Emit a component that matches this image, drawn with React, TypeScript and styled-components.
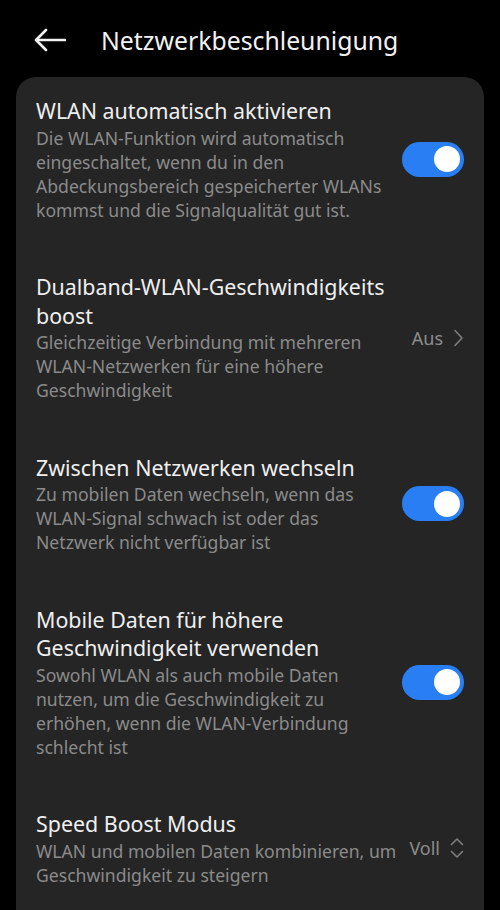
import React from "react";
import styled, { createGlobalStyle } from "styled-components";

const GlobalStyle = createGlobalStyle`
  html, body {
    margin: 0;
    padding: 0;
    background: #000000;
  }
  body {
    font-family: "Noto Sans", Roboto, "Liberation Sans", sans-serif;
    -webkit-font-smoothing: antialiased;
  }
`;

const Screen = styled.div`
  width: 500px;
  height: 910px;
  background: #000000;
  overflow: hidden;
  display: flex;
  flex-direction: column;
`;

const TopBar = styled.div`
  height: 77px;
  flex-shrink: 0;
  display: flex;
  align-items: center;
  padding: 2px 0 0 34px;
  box-sizing: border-box;
`;

const BackButton = styled.div`
  width: 34px;
  height: 30px;
  display: flex;
  align-items: center;
  margin-right: 33px;
`;

const Title = styled.div`
  font-size: 24.8px;
  color: #f2f2f2;
`;

const Card = styled.div`
  margin: 0 16px;
  background: #252525;
  border-radius: 20px 20px 0 0;
  padding: 0 20px;
  flex: 1;
`;

const Row = styled.div<{ $first?: boolean }>`
  display: flex;
  align-items: center;
  padding: ${(p) => (p.$first ? 20 : 26)}px 0 25.5px;
`;

const Texts = styled.div`
  flex: 1;
  min-width: 0;
`;

const RowTitle = styled.div`
  font-size: 21.4px;
  line-height: 28.5px;
  color: #efefef;
`;

const RowSub = styled.div`
  font-size: 17.6px;
  line-height: 24px;
  color: #8b8b8b;
  white-space: nowrap;
`;

const Toggle = styled.div<{ $on: boolean }>`
  width: 62px;
  height: 35px;
  border-radius: 18px;
  background: ${(p) => (p.$on ? "#2a7ef3" : "#555555")};
  display: flex;
  align-items: center;
  justify-content: ${(p) => (p.$on ? "flex-end" : "flex-start")};
  padding: 0 4px;
  box-sizing: border-box;
  flex-shrink: 0;
  margin-left: 12px;
`;

const Knob = styled.div`
  width: 26px;
  height: 26px;
  border-radius: 50%;
  background: #ffffff;
`;

const Value = styled.div`
  display: flex;
  align-items: center;
  gap: 10px;
  font-size: 18px;
  color: #8b8b8b;
  flex-shrink: 0;
  margin-left: 12px;
`;

const ChevronRight = () => (
  <svg width="11" height="18" viewBox="0 0 11 18">
    <path d="M2 1.5 L9 9 L2 16.5" fill="none" stroke="#7d7d7d" strokeWidth="1.6" strokeLinecap="round" strokeLinejoin="round" />
  </svg>
);

const ChevronUpDown = () => (
  <svg width="14" height="22" viewBox="0 0 14 22">
    <path d="M1.5 7.5 L7 2 L12.5 7.5" fill="none" stroke="#7d7d7d" strokeWidth="1.6" strokeLinecap="round" strokeLinejoin="round" />
    <path d="M1.5 14.5 L7 20 L12.5 14.5" fill="none" stroke="#7d7d7d" strokeWidth="1.6" strokeLinecap="round" strokeLinejoin="round" />
  </svg>
);

const BackArrow = () => (
  <svg width="32" height="24" viewBox="0 0 32 24">
    <path d="M2 12 H31 M12 2 L2 12 L12 22" fill="none" stroke="#f2f2f2" strokeWidth="2.6" strokeLinecap="round" strokeLinejoin="round" />
  </svg>
);

const SwitchOn = () => (
  <Toggle $on>
    <Knob />
  </Toggle>
);

type Item = {
  title: string[];
  sub: string[];
  control: React.ReactNode;
};

const items: Item[] = [
  {
    title: ["WLAN automatisch aktivieren"],
    sub: [
      "Die WLAN-Funktion wird automatisch",
      "eingeschaltet, wenn du in den",
      "Abdeckungsbereich gespeicherter WLANs",
      "kommst und die Signalqualität gut ist.",
    ],
    control: <SwitchOn />,
  },
  {
    title: ["Dualband-WLAN-Geschwindigkeits", "boost"],
    sub: [
      "Gleichzeitige Verbindung mit mehreren",
      "WLAN-Netzwerken für eine höhere",
      "Geschwindigkeit",
    ],
    control: (
      <Value>
        Aus <ChevronRight />
      </Value>
    ),
  },
  {
    title: ["Zwischen Netzwerken wechseln"],
    sub: [
      "Zu mobilen Daten wechseln, wenn das",
      "WLAN-Signal schwach ist oder das",
      "Netzwerk nicht verfügbar ist",
    ],
    control: <SwitchOn />,
  },
  {
    title: ["Mobile Daten für höhere", "Geschwindigkeit verwenden"],
    sub: [
      "Sowohl WLAN als auch mobile Daten",
      "nutzen, um die Geschwindigkeit zu",
      "erhöhen, wenn die WLAN-Verbindung",
      "schlecht ist",
    ],
    control: <SwitchOn />,
  },
  {
    title: ["Speed Boost Modus"],
    sub: ["WLAN und mobilen Daten kombinieren, um", "Geschwindigkeit zu steigern"],
    control: (
      <Value>
        Voll <ChevronUpDown />
      </Value>
    ),
  },
];

export default function App() {
  return (
    <>
      <GlobalStyle />
      <Screen>
        <TopBar>
          <BackButton>
            <BackArrow />
          </BackButton>
          <Title>Netzwerkbeschleunigung</Title>
        </TopBar>
        <Card>
          {items.map((it, i) => (
            <Row key={i} $first={i === 0}>
              <Texts>
                <RowTitle>
                  {it.title.map((t, j) => (
                    <div key={j}>{t}</div>
                  ))}
                </RowTitle>
                <RowSub>
                  {it.sub.map((s, j) => (
                    <div key={j}>{s}</div>
                  ))}
                </RowSub>
              </Texts>
              {it.control}
            </Row>
          ))}
        </Card>
      </Screen>
    </>
  );
}
